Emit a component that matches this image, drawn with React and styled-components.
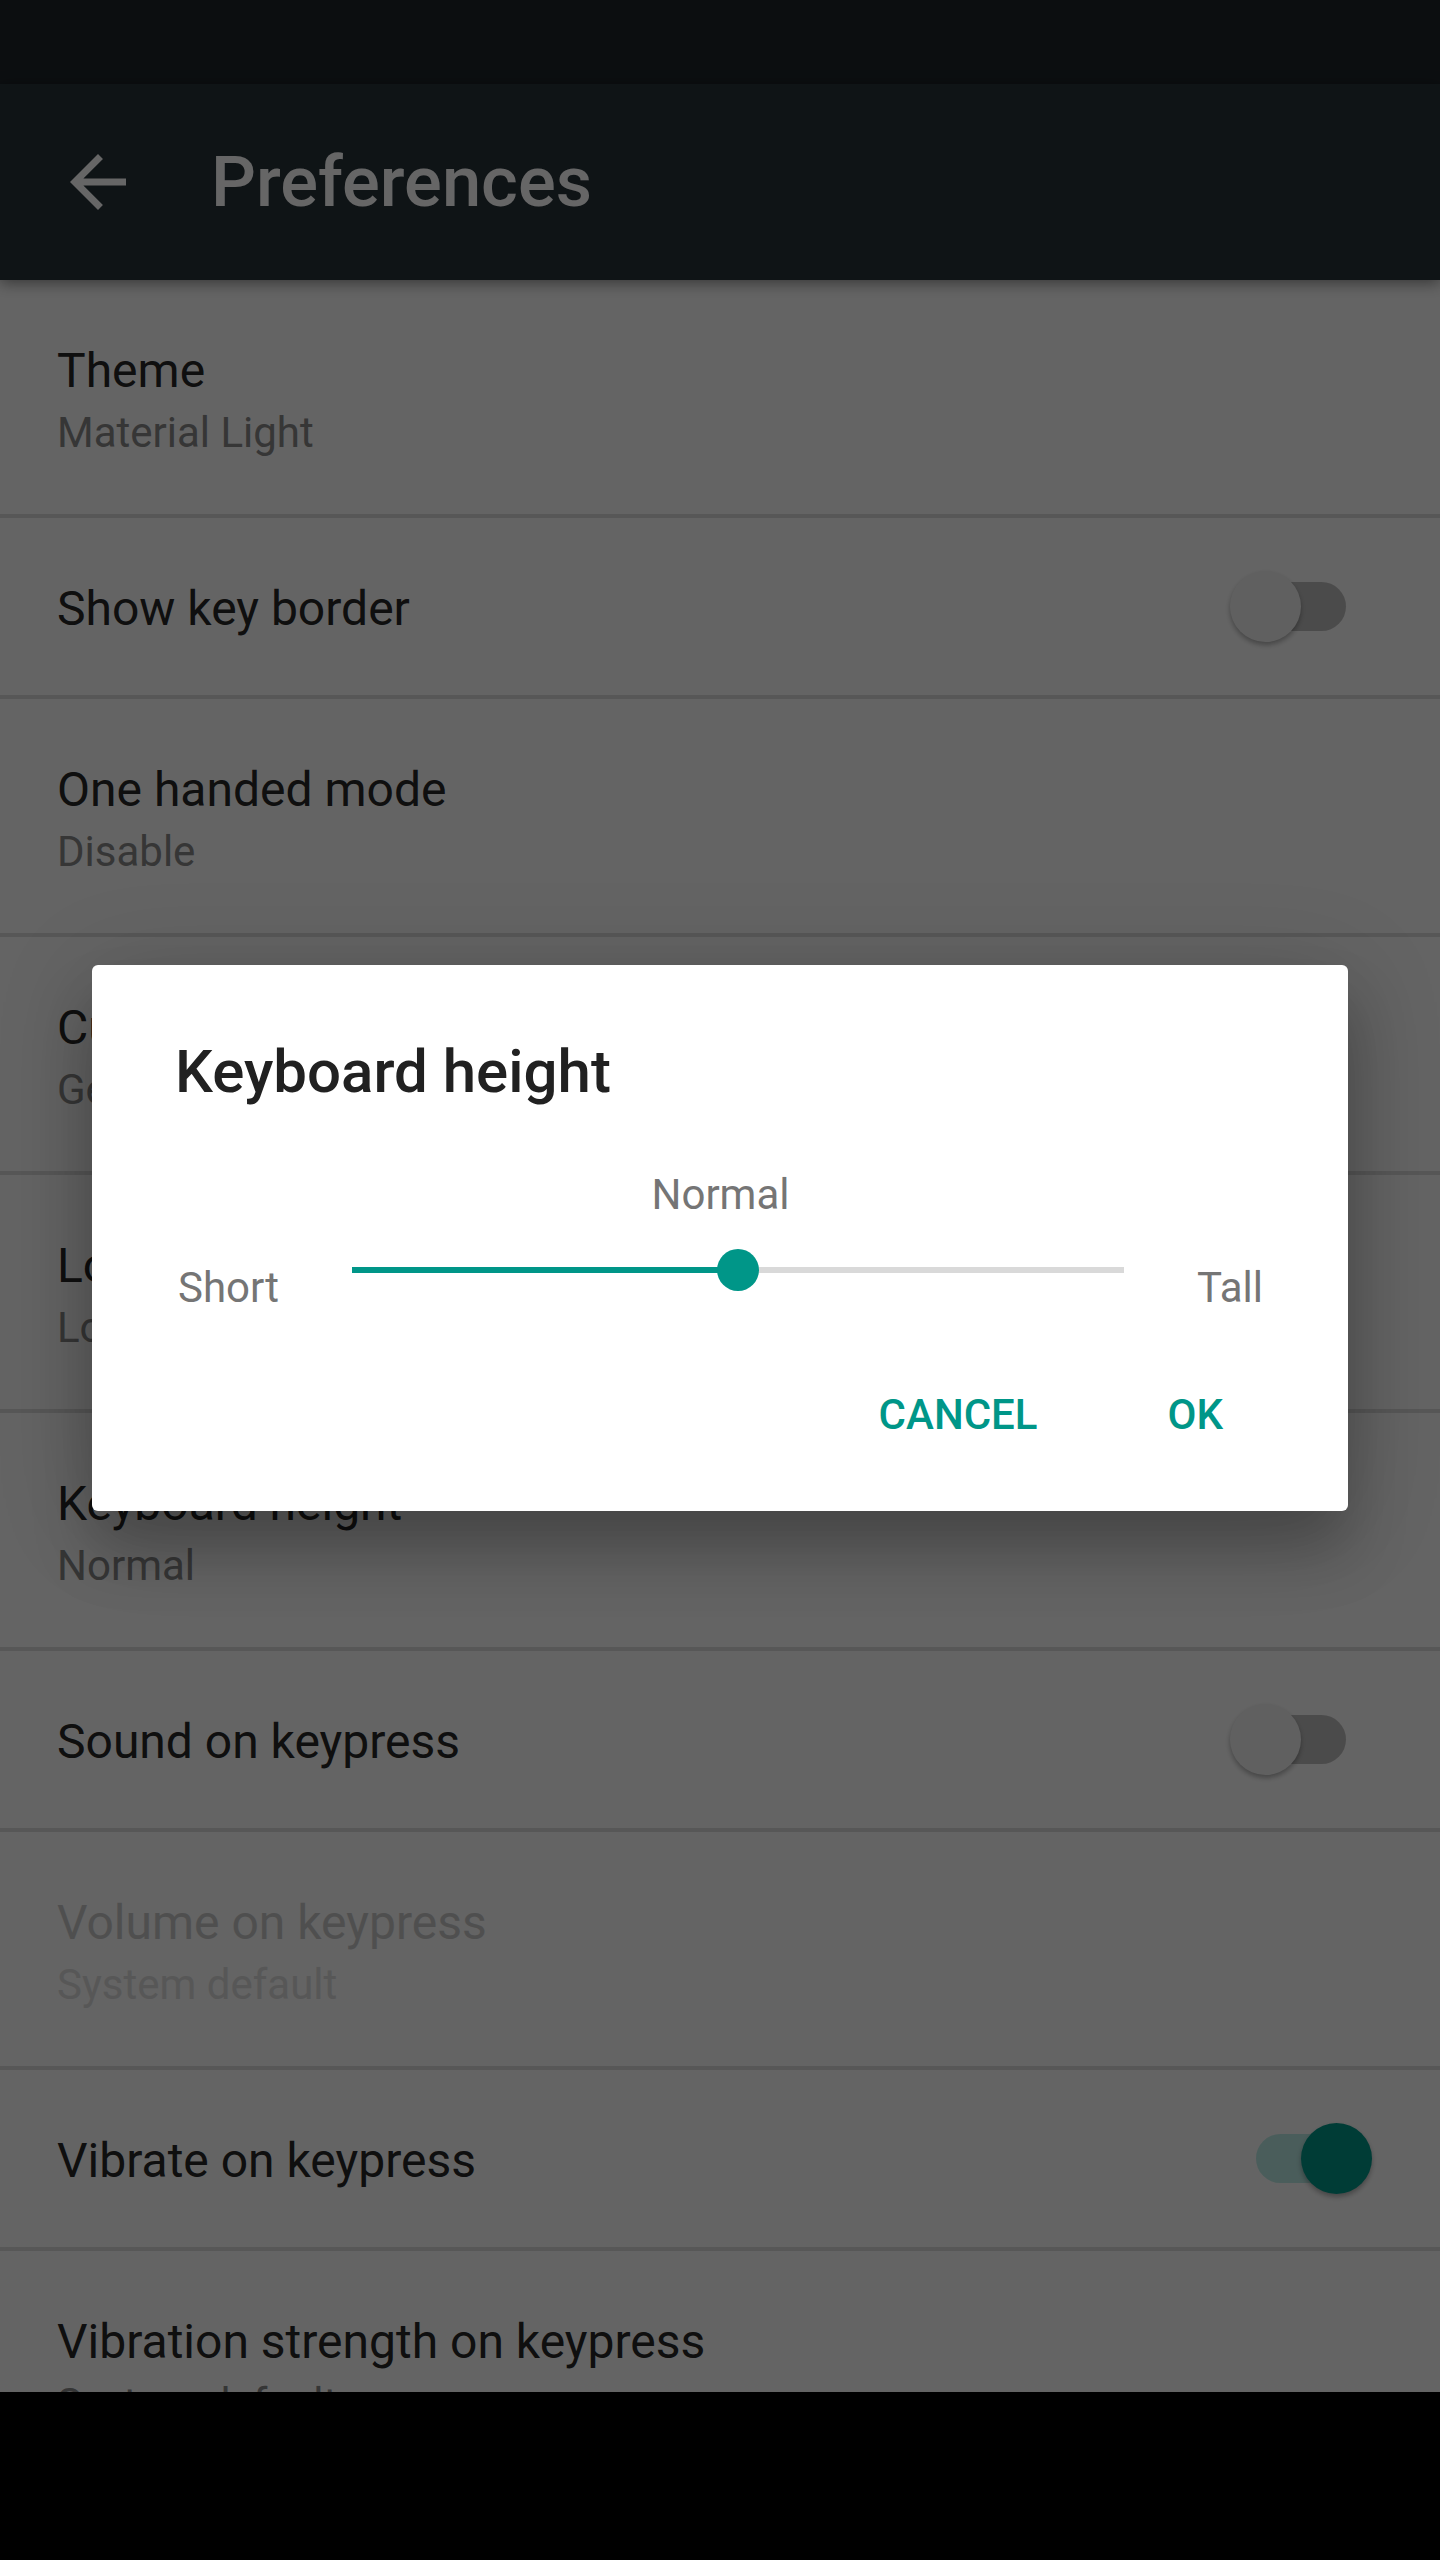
import styled, { createGlobalStyle } from 'styled-components'

const GlobalStyle = createGlobalStyle`
  html, body {
    margin: 0;
    padding: 0;
    background: #000;
  }
  body {
    font-family: Roboto, 'Noto Sans', sans-serif;
  }
  * {
    box-sizing: border-box;
  }
`

const teal = '#009688'

const Screen = styled.div`
  position: relative;
  width: 1440px;
  height: 2560px;
  display: flex;
  flex-direction: column;
  overflow: hidden;
  background: #fafafa;
`

const StatusBar = styled.div`
  flex: none;
  height: 84px;
  background: #1e252a;
`

const Toolbar = styled.header`
  flex: none;
  position: relative;
  z-index: 1;
  height: 196px;
  display: flex;
  align-items: center;
  padding-left: 56px;
  background: #263238;
  box-shadow: 0 3px 14px rgba(0, 0, 0, 0.45);
`

const BackButton = styled.button`
  width: 84px;
  height: 84px;
  padding: 0;
  border: 0;
  background: none;
  color: #fff;
  display: flex;

  svg {
    width: 84px;
    height: 84px;
  }
`

const ToolbarTitle = styled.h1`
  margin: 0 0 0 71px;
  font-size: 70.5px;
  font-weight: 500;
  color: #fff;
`

const List = styled.main`
  flex: 1;
  overflow: hidden;
  background: #fafafa;
`

const Row = styled.div`
  box-sizing: content-box;
  height: ${({ $twoLine }) => ($twoLine ? 234 : 177)}px;
  display: flex;
  align-items: center;
  justify-content: space-between;
  padding: 0 68px 0 57px;

  & + & {
    border-top: 4px solid #d9d9d9;
  }
`

const Texts = styled.div`
  align-self: flex-start;
  padding-top: 61px;
  white-space: nowrap;
`

const Title = styled.div`
  font-size: 48px;
  line-height: 60px;
  color: ${({ $disabled }) => ($disabled ? '#c6c6c6' : '#262626')};
`

const Summary = styled.div`
  margin-top: 4px;
  font-size: 42px;
  line-height: 56px;
  color: ${({ $disabled }) => ($disabled ? '#d9d9d9' : '#878787')};
`

const SwitchBox = styled.div`
  position: relative;
  flex: none;
  width: 142px;
  height: 71px;
`

const SwitchTrack = styled.div`
  position: absolute;
  left: 26px;
  top: 11px;
  width: 90px;
  height: 49px;
  border-radius: 25px;
  background: ${({ $on }) => ($on ? '#b9e8e3' : '#bcbcbc')};
`

const SwitchThumb = styled.div`
  position: absolute;
  top: 0;
  left: ${({ $on }) => ($on ? 71 : 0)}px;
  width: 71px;
  height: 71px;
  border-radius: 50%;
  background: ${({ $on }) => ($on ? teal : '#f1f1f1')};
  box-shadow: 0 3px 5px rgba(0, 0, 0, 0.3);
`

const NavBar = styled.div`
  flex: none;
  height: 168px;
  background: #000;
`

const Scrim = styled.div`
  position: absolute;
  inset: 0;
  z-index: 2;
  display: flex;
  align-items: center;
  justify-content: center;
  padding: 84px 0 168px;
  background: rgba(0, 0, 0, 0.6);
`

const Dialog = styled.div`
  width: 1256px;
  padding: 71px 85px 71px 86px;
  border-radius: 6px;
  background: #fff;
  box-shadow:
    0 40px 60px rgba(0, 0, 0, 0.22),
    0 12px 100px rgba(0, 0, 0, 0.16);
`

const DialogTitle = styled.h2`
  margin: 0 0 0 -3px;
  font-size: 60px;
  line-height: 72px;
  font-weight: 500;
  color: #212121;
`

const ValueLabel = styled.div`
  margin-top: 62px;
  text-align: center;
  font-size: 42px;
  line-height: 50px;
  color: #757575;
`

const SliderRow = styled.div`
  margin-top: 29px;
  display: flex;
  align-items: flex-start;
`

const RangeLabel = styled.span`
  flex: none;
  margin-top: 14px;
  font-size: 42px;
  line-height: 50px;
  color: #757575;
`

const Slider = styled.div`
  position: relative;
  flex: 1;
  height: 42px;
  margin: 0 73px;
  display: flex;
  align-items: center;
`

const SliderTrack = styled.div`
  width: 100%;
  height: 6px;
  background: #d9d9d9;
`

const SliderFill = styled.div`
  height: 100%;
  background: ${teal};
`

const SliderThumb = styled.div`
  position: absolute;
  top: 0;
  width: 42px;
  height: 42px;
  margin-left: -21px;
  border-radius: 50%;
  background: ${teal};
`

const ButtonRow = styled.div`
  margin-top: 77px;
  display: flex;
  justify-content: flex-end;
  gap: 130px;
  padding-right: 40px;
`

const TextButton = styled.button`
  padding: 0;
  border: 0;
  background: none;
  font-family: inherit;
  font-size: 42px;
  line-height: 50px;
  font-weight: 500;
  color: ${teal};
`

const prefs = [
  { title: 'Theme', summary: 'Material Light' },
  { title: 'Show key border', toggle: false },
  { title: 'One handed mode', summary: 'Disable' },
  { title: 'Custom input styles', summary: 'German (QWERTY)' },
  { title: 'Long press delay', summary: 'Long' },
  { title: 'Keyboard height', summary: 'Normal' },
  { title: 'Sound on keypress', toggle: false },
  { title: 'Volume on keypress', summary: 'System default', disabled: true },
  { title: 'Vibrate on keypress', toggle: true },
  { title: 'Vibration strength on keypress', summary: 'System default' },
]

const Switch = ({ on }) => (
  <SwitchBox>
    <SwitchTrack $on={on} />
    <SwitchThumb $on={on} />
  </SwitchBox>
)

const PrefRow = ({ title, summary, toggle, disabled }) => (
  <Row $twoLine={!!summary}>
    <Texts>
      <Title $disabled={disabled}>{title}</Title>
      {summary && <Summary $disabled={disabled}>{summary}</Summary>}
    </Texts>
    {toggle !== undefined && <Switch on={toggle} />}
  </Row>
)

const value = 0.5

const App = () => (
  <Screen>
    <GlobalStyle />
    <StatusBar />
    <Toolbar>
      <BackButton aria-label='Back'>
        <svg viewBox='0 0 24 24' fill='currentColor'>
          <path d='M20 11H7.83l5.59-5.59L12 4l-8 8 8 8 1.41-1.41L7.83 13H20v-2z' />
        </svg>
      </BackButton>
      <ToolbarTitle>Preferences</ToolbarTitle>
    </Toolbar>

    <List>
      {prefs.map((p) => (
        <PrefRow key={p.title} {...p} />
      ))}
    </List>

    <NavBar />

    <Scrim>
      <Dialog>
        <DialogTitle>Keyboard height</DialogTitle>
        <ValueLabel>Normal</ValueLabel>
        <SliderRow>
          <RangeLabel>Short</RangeLabel>
          <Slider>
            <SliderTrack>
              <SliderFill style={{ width: `${value * 100}%` }} />
            </SliderTrack>
            <SliderThumb style={{ left: `${value * 100}%` }} />
          </Slider>
          <RangeLabel>Tall</RangeLabel>
        </SliderRow>
        <ButtonRow>
          <TextButton>CANCEL</TextButton>
          <TextButton>OK</TextButton>
        </ButtonRow>
      </Dialog>
    </Scrim>
  </Screen>
)

export default App
